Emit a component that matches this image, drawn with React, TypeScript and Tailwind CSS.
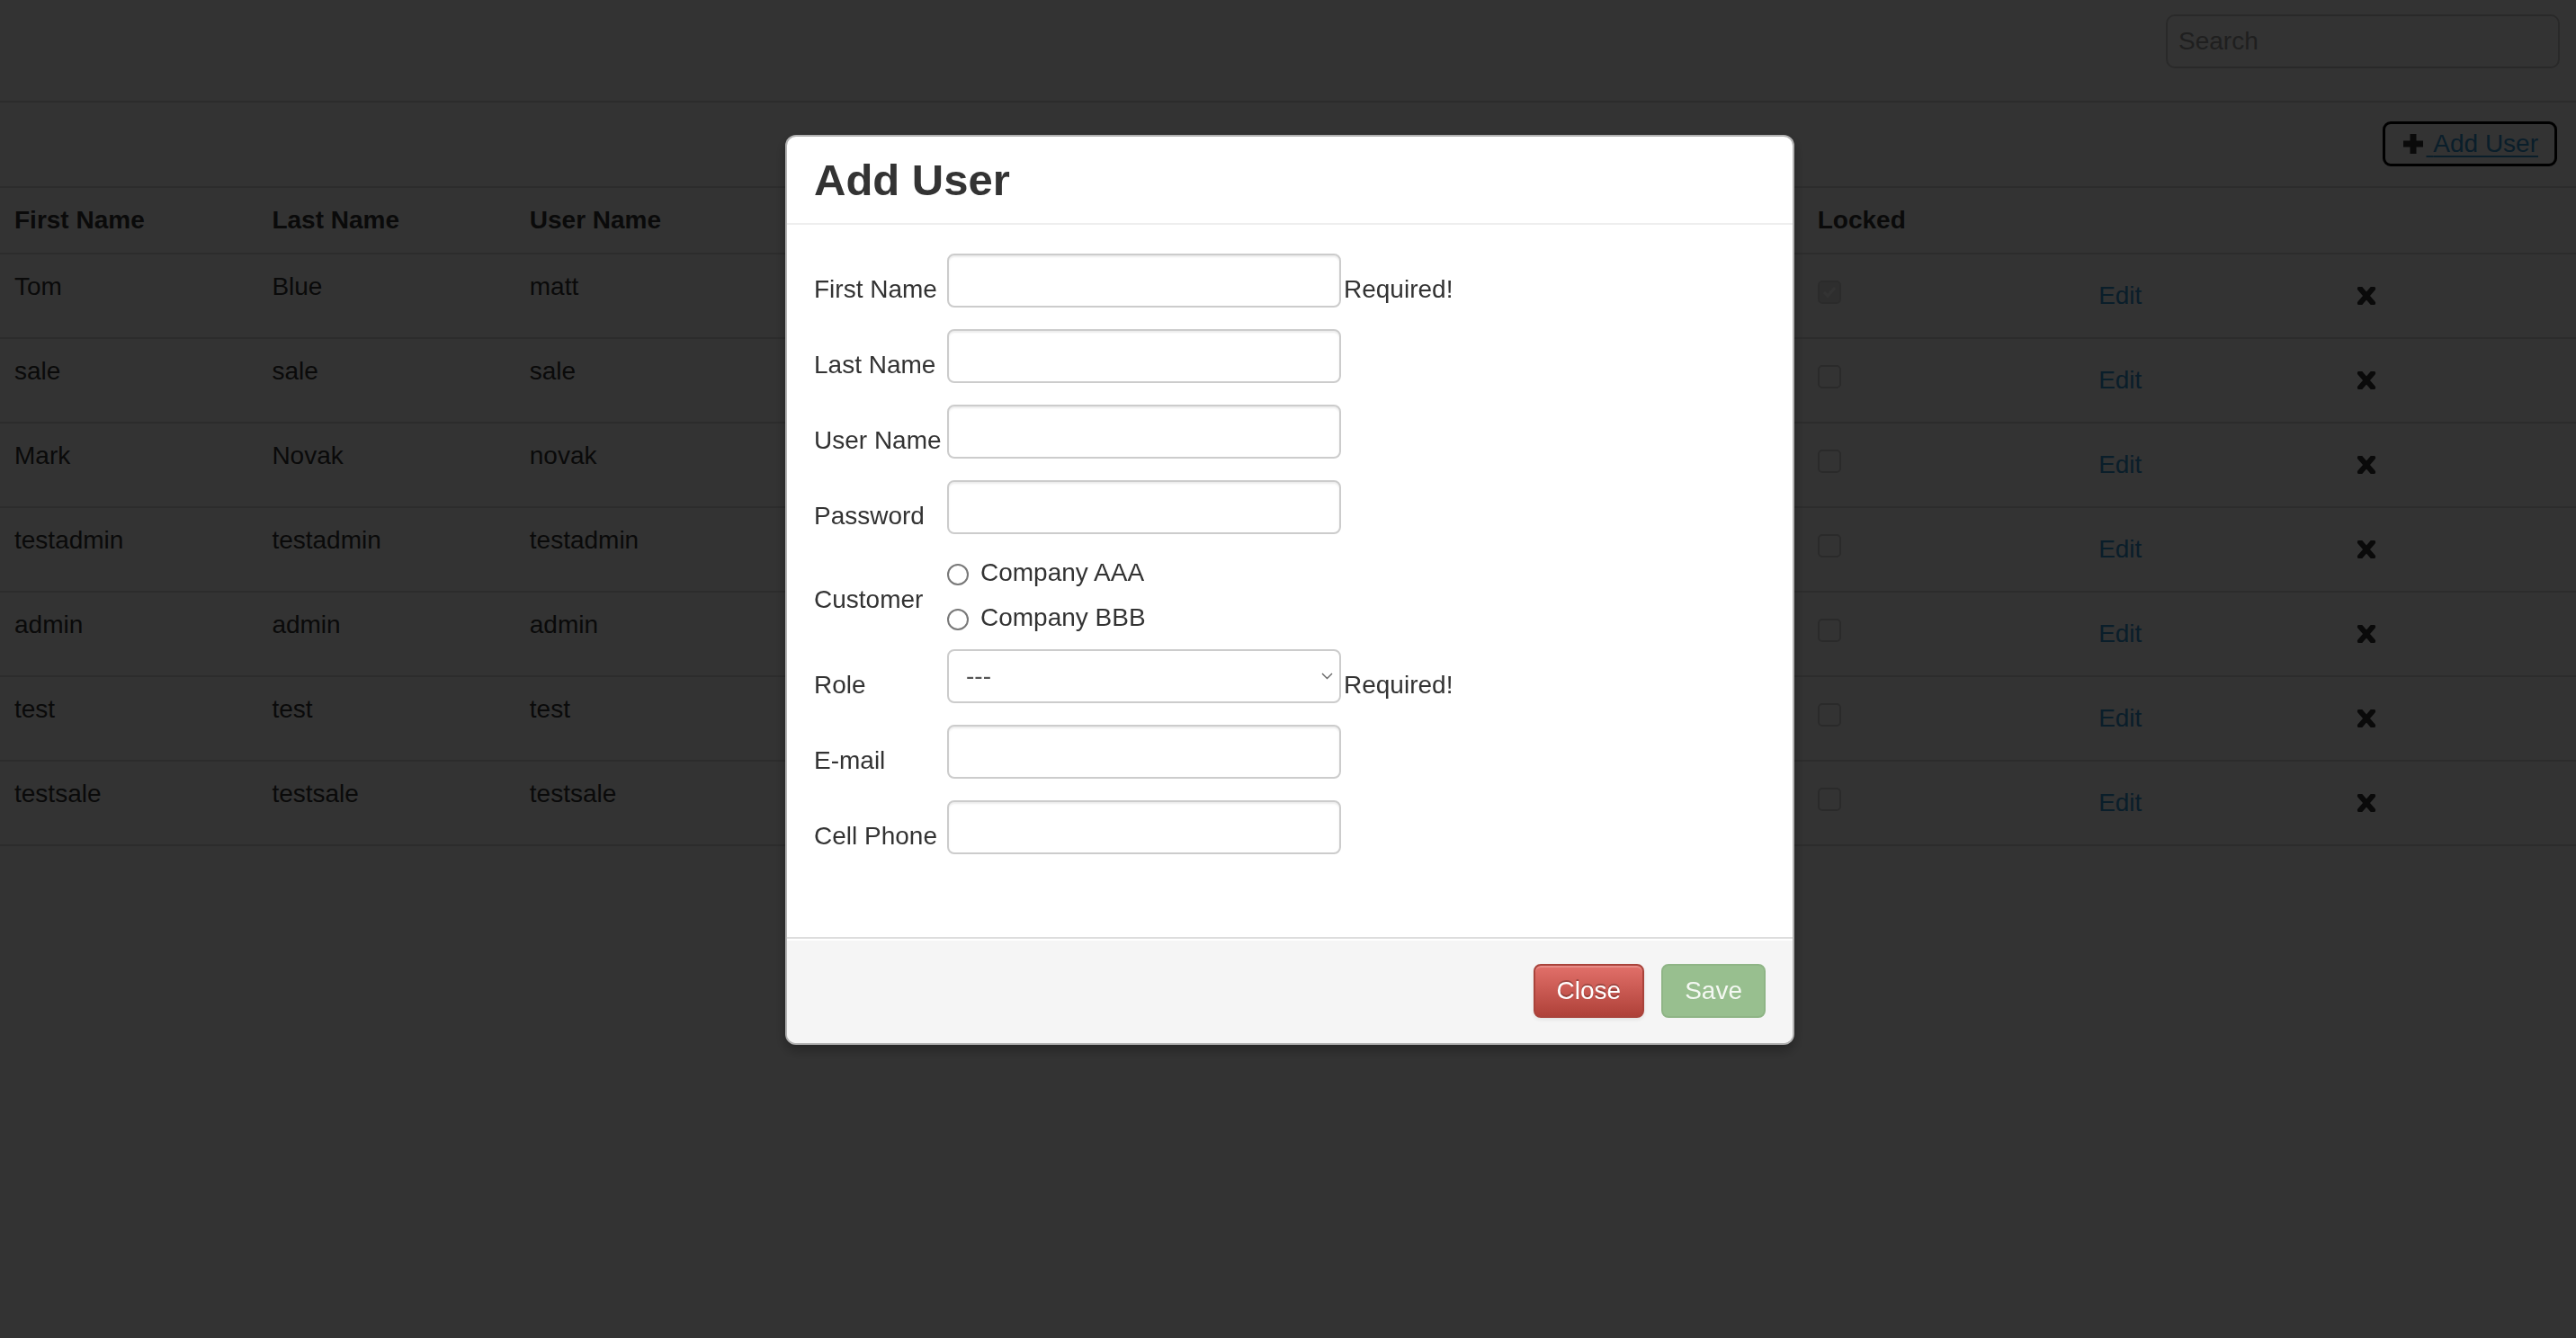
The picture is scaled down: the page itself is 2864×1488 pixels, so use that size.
import { useState } from 'react';

interface UserRow {
  first: string;
  last: string;
  user: string;
  locked: boolean;
}

const users: UserRow[] = [
  { first: 'Tom', last: 'Blue', user: 'matt', locked: true },
  { first: 'sale', last: 'sale', user: 'sale', locked: false },
  { first: 'Mark', last: 'Novak', user: 'novak', locked: false },
  { first: 'testadmin', last: 'testadmin', user: 'testadmin', locked: false },
  { first: 'admin', last: 'admin', user: 'admin', locked: false },
  { first: 'test', last: 'test', user: 'test', locked: false },
  { first: 'testsale', last: 'testsale', user: 'testsale', locked: false },
];

const columns = ['First Name', 'Last Name', 'User Name', 'E-mail', 'Cell Phone', 'Customer', 'Role', 'Locked', '', ''];

function RemoveIcon() {
  return (
    <svg width="22" height="20" viewBox="0 0 22 20" className="text-[#333]">
      <path d="M4 2 L18 18 M18 2 L4 18" stroke="currentColor" strokeWidth="6" strokeLinecap="round" />
    </svg>
  );
}

function PlusIcon() {
  return (
    <svg width="22" height="22" viewBox="0 0 22 22" className="text-[#333]">
      <rect x="0" y="7.5" width="22" height="7" fill="currentColor" />
      <rect x="7.5" y="0" width="7" height="22" fill="currentColor" />
    </svg>
  );
}

function TextInput() {
  return (
    <div className="w-[438px] h-[60px] shrink-0 bg-white border-2 border-[#cccccc] rounded-[8px] shadow-[inset_0_2px_2px_rgba(0,0,0,0.075)]" />
  );
}

function FormRow({ label, required, className }: { label: string; required?: boolean; className?: string }) {
  return (
    <div className={`flex items-end ${className ?? 'mb-[24px]'}`}>
      <label className="w-[148px] shrink-0 leading-[40px]">{label}</label>
      <TextInput />
      {required && <span className="ml-[3px] leading-[40px]">Required!</span>}
    </div>
  );
}

export default function App() {
  const [customer, setCustomer] = useState<string | null>(null);

  return (
    <div className="relative min-h-screen bg-white font-[family-name:Liberation_Sans,Arial,sans-serif] text-[28px] leading-[40px] text-[#333]">
      {/* Top bar */}
      <div className="h-[114px] border-b-2 border-[#dddddd] flex justify-end items-start pt-[16px] pr-[18px]">
        <div className="w-[438px] h-[60px] border-2 border-[#cccccc] rounded-[10px] flex items-center pl-[12px] text-[#999]">
          Search
        </div>
      </div>

      {/* Add user */}
      <div className="flex justify-end pt-[21px] pr-[21px] mb-[22px]">
        <a className="h-[50px] flex items-center pl-[20px] pr-[18px] border-[3px] border-black rounded-[9px] text-[#3394d1]">
          <PlusIcon />
          <span className="underline underline-offset-[4px] ml-[4px]">{'\u00a0'}Add User</span>
        </a>
      </div>

      {/* Users table */}
      <table className="w-full table-fixed border-collapse border-b-2 border-[#dddddd]">
        <thead>
          <tr>
            {columns.map((c, i) => (
              <th key={i} className="text-left font-bold align-top p-[16px] border-t-2 border-[#dddddd]">
                {c}
              </th>
            ))}
          </tr>
        </thead>
        <tbody>
          {users.map((u) => (
            <tr key={u.user}>
              <td className="align-top p-[16px] border-t-2 border-[#dddddd]">{u.first}</td>
              <td className="align-top p-[16px] border-t-2 border-[#dddddd]">{u.last}</td>
              <td className="align-top p-[16px] border-t-2 border-[#dddddd]">{u.user}</td>
              <td className="align-top p-[16px] border-t-2 border-[#dddddd]"></td>
              <td className="align-top p-[16px] border-t-2 border-[#dddddd]"></td>
              <td className="align-top p-[16px] border-t-2 border-[#dddddd]"></td>
              <td className="align-top p-[16px] border-t-2 border-[#dddddd]"></td>
              <td className="align-top p-[16px] border-t-2 border-[#dddddd]">
                {u.locked ? (
                  <div className="mt-[13px] w-[26px] h-[26px] rounded-[5px] bg-[#e6e6e6] border-2 border-[#d6d6d6] flex items-center justify-center">
                    <svg width="16" height="14" viewBox="0 0 16 14">
                      <path d="M2 7 L6 11 L14 2" stroke="white" strokeWidth="3" fill="none" />
                    </svg>
                  </div>
                ) : (
                  <div className="mt-[13px] w-[26px] h-[26px] rounded-[5px] bg-white border-2 border-[#cfcfcf]" />
                )}
              </td>
              <td className="align-top p-[16px] border-t-2 border-[#dddddd]">
                <button className="h-[60px] px-[24px] border-2 border-transparent text-[#3394d1]">Edit</button>
              </td>
              <td className="align-top p-[16px] border-t-2 border-[#dddddd]">
                <button className="h-[60px] px-[24px] border-2 border-transparent flex items-center">
                  <RemoveIcon />
                </button>
              </td>
            </tr>
          ))}
        </tbody>
      </table>

      {/* Backdrop */}
      <div className="fixed inset-0 bg-black/80" />

      {/* Modal */}
      <div className="fixed inset-0 flex justify-center items-start pt-[150px] pl-[4px]">
        <div className="w-[1122px] bg-white border-2 border-black/30 rounded-[12px] shadow-[0_6px_14px_rgba(0,0,0,0.3)] overflow-hidden">
          <div className="px-[30px] py-[18px] border-b-2 border-[#eeeeee]">
            <h3 className="text-[49px] leading-[60px] font-bold text-[#333]">Add User</h3>
          </div>

          <div className="h-[792px] px-[30px] pt-[32px]">
            <FormRow label="First Name" required />
            <FormRow label="Last Name" />
            <FormRow label="User Name" />
            <FormRow label="Password" />

            <div className="flex mt-[-6px] mb-[10px]">
              <label className="w-[148px] shrink-0 pt-[35px] leading-[40px]">Customer</label>
              <div className="flex flex-col">
                {['Company AAA', 'Company BBB'].map((c) => (
                  <div key={c} className="h-[50px] flex items-center gap-[13px] cursor-pointer" onClick={() => setCustomer(c)}>
                    <span className="w-[24px] h-[24px] rounded-full border-2 border-[#787878] bg-white translate-y-[2px] flex items-center justify-center">
                      {customer === c && <span className="w-[12px] h-[12px] rounded-full bg-[#333]" />}
                    </span>
                    <span className="leading-[50px]">{c}</span>
                  </div>
                ))}
              </div>
            </div>

            <div className="flex items-end mb-[24px]">
              <label className="w-[148px] shrink-0 leading-[40px]">Role</label>
              <div className="w-[438px] h-[60px] shrink-0 bg-white border-2 border-[#cccccc] rounded-[8px] flex items-center justify-between pl-[19px] pr-[7px]">
                <span className="text-[#555]">---</span>
                <svg width="13" height="8" viewBox="0 0 13 8">
                  <path d="M1 1 L6.5 6.5 L12 1" stroke="#666" strokeWidth="1.4" fill="none" />
                </svg>
              </div>
              <span className="ml-[3px] leading-[40px]">Required!</span>
            </div>

            <FormRow label="E-mail" />
            <FormRow label="Cell Phone" />
          </div>

          <div className="border-t-2 border-[#dddddd] bg-[#f5f5f5] shadow-[inset_0_2px_0_#fff] pt-[28px] pb-[28px] px-[30px] flex justify-end gap-[19px]">
            <button className="h-[60px] px-[24px] rounded-[8px] border-2 border-[#a9433b] bg-linear-to-b from-[#e2706a] to-[#af4139] text-white [text-shadow:0_-2px_0_rgba(0,0,0,0.25)] shadow-[inset_0_2px_0_rgba(255,255,255,0.2),0_2px_4px_rgba(0,0,0,0.08)]">
              Close
            </button>
            <button className="h-[60px] px-[24px] rounded-[8px] border-2 border-[#8fb586] bg-[#98bf8f] text-[#f4f8f2]">
              Save
            </button>
          </div>
        </div>
      </div>
    </div>
  );
}
